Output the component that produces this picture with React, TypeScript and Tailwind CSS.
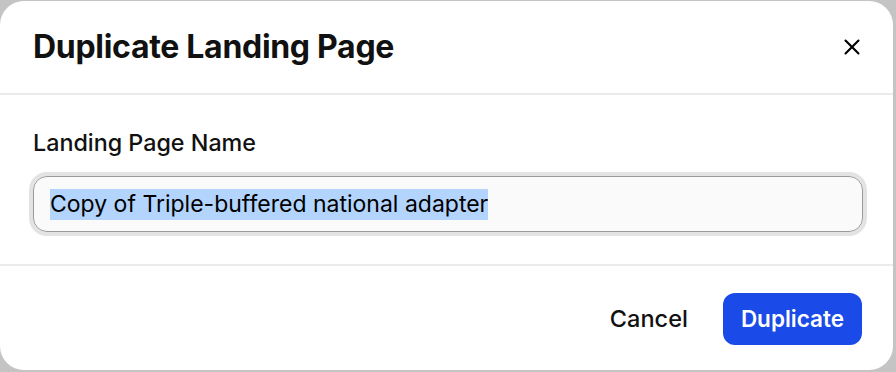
import { X } from 'lucide-react';

export default function App() {
  return (
    <div className="h-[372px] w-[896px] overflow-hidden bg-[#c4c4c4] pt-[1px] pr-[3px]" style={{ fontFamily: 'Inter, "Liberation Sans", sans-serif' }}>
      <div className="flex h-[369px] flex-col rounded-[24px] bg-white">
        {/* Header */}
        <div className="flex h-[94px] items-center justify-between border-b-2 border-[#ebebeb] pl-[33px] pr-[28px]">
          <h2 className="text-[32px] font-bold tracking-[-0.3px] text-[#111]">Duplicate Landing Page</h2>
          <button className="text-black">
            <X className="h-[26px] w-[26px]" strokeWidth={1.9} />
          </button>
        </div>

        {/* Body */}
        <div className="h-[171px] border-b-2 border-[#ebebeb] pl-[29px] pr-[26px] pt-[33px]">
          <label className="block pl-[4px] text-[23.3px] font-medium leading-[30px] text-[#111]">Landing Page Name</label>
          <div className="mt-[14px] h-[64px] rounded-[18px] border-[4px] border-[#e3e3e3]">
            <div className="flex h-full items-center rounded-[14px] border border-[#9a9a9a] bg-[#fafafa] px-[16px]">
              <span className="bg-[#b3d4fd] text-[23px] leading-[31px] text-black">Copy of Triple-buffered national adapter</span>
            </div>
          </div>
        </div>

        {/* Footer */}
        <div className="flex flex-1 items-center justify-end gap-[35px] pr-[31px] pt-[2px]">
          <button className="text-[23.5px] font-medium text-[#111]">Cancel</button>
          <button className="h-[52px] rounded-[12px] bg-[#1a4ae8] px-[18px] text-[22.5px] font-semibold text-white">Duplicate</button>
        </div>
      </div>
    </div>
  );
}
